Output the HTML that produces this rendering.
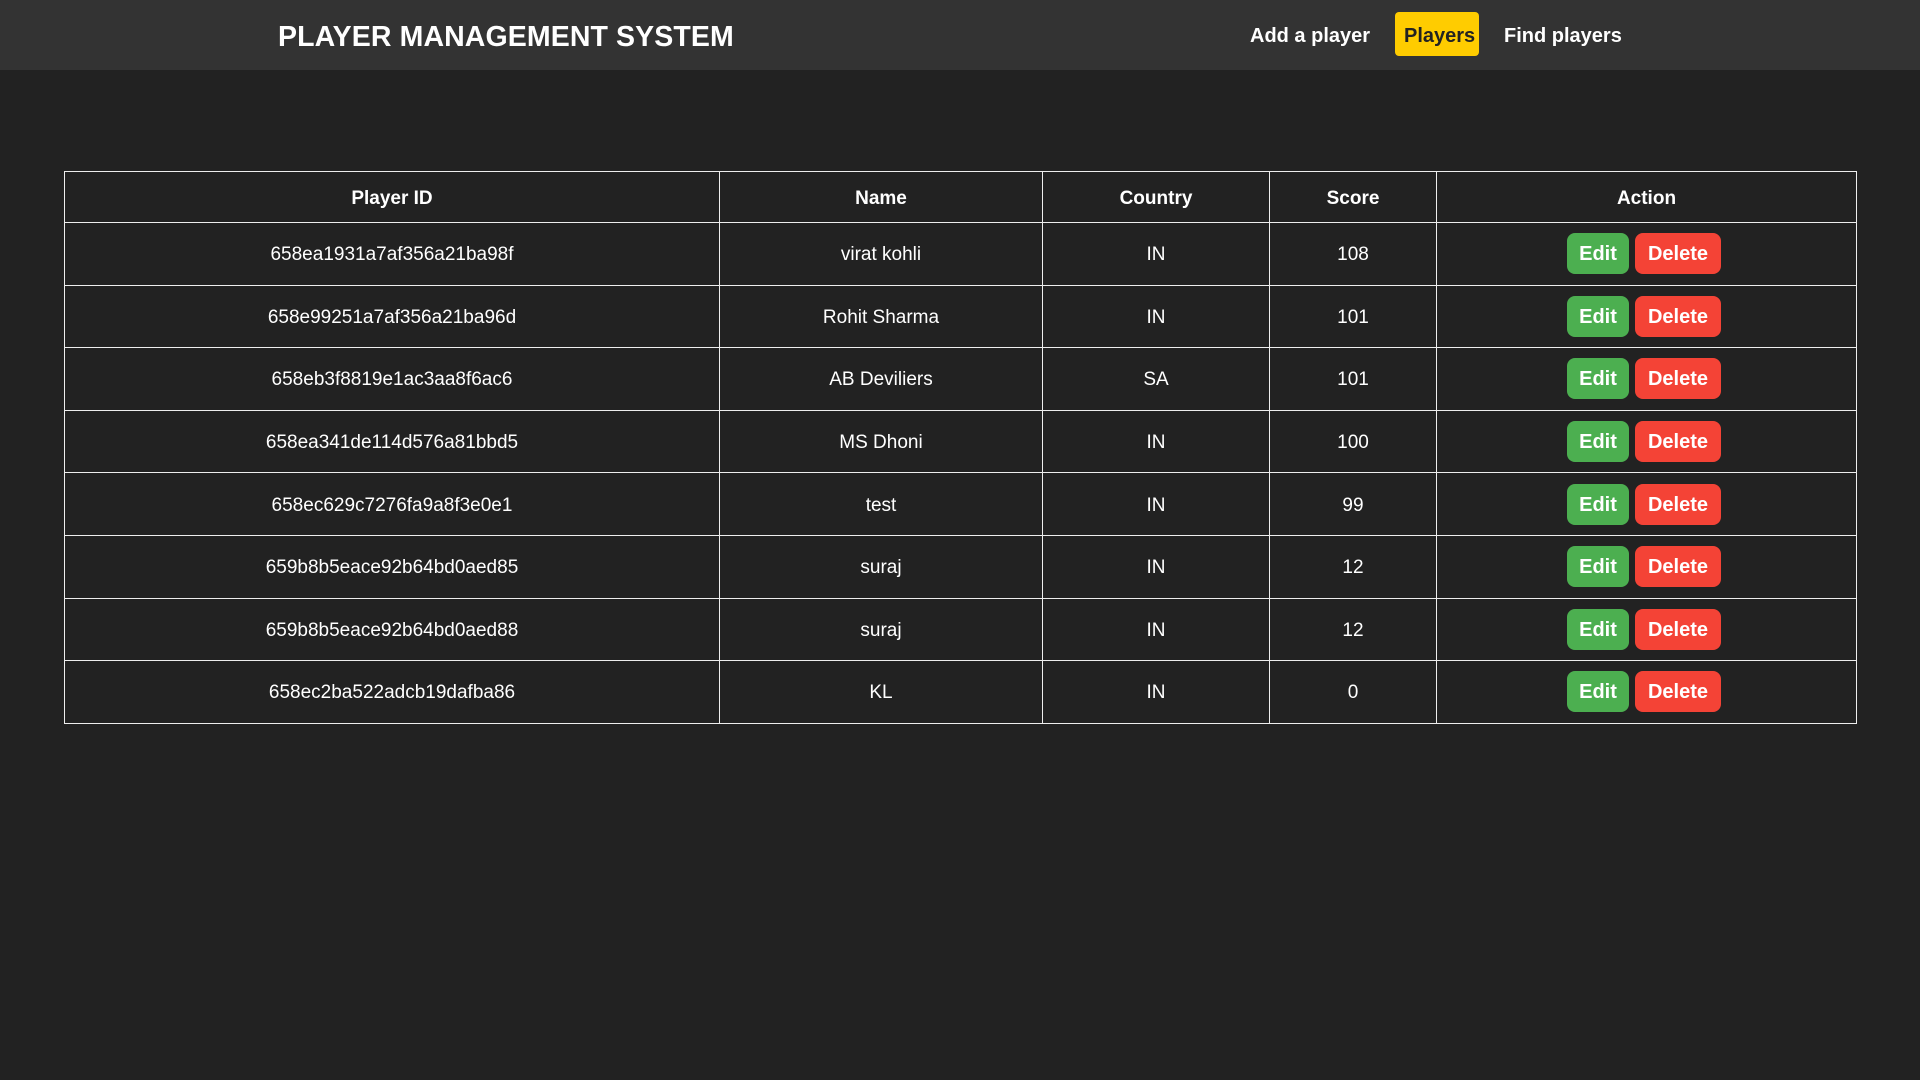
<!DOCTYPE html>
<html><head><meta charset="utf-8"><style>
*{margin:0;padding:0;box-sizing:border-box}
body{width:1920px;height:1080px;background:#222;font-family:"Liberation Sans",sans-serif;color:#fff;overflow:hidden}
.hdr{height:70px;background:#333;position:relative}
.title{position:absolute;left:278px;top:21px;font-size:28.5px;font-weight:bold;letter-spacing:0.1px}
.nav{position:absolute;top:14px;height:44px;line-height:44px;font-size:20px;font-weight:bold}
.pl{top:12px;background:#ffcc00;color:#222;border-radius:4px;padding:0 9px;left:1395px;width:84px;text-align:center}
table{position:absolute;left:64px;top:171px;width:1793px;border-collapse:collapse}
td,th{border:1px solid #eee;text-align:center;font-size:19px}
th{height:51px;font-weight:bold;padding-top:3px}
td{height:62.6px;padding-top:3px}
td:last-child{padding-top:0;padding-right:5px}
.b{display:inline-block;height:41px;line-height:43px;border-radius:8px;font-size:20px;font-weight:bold;color:#fff;vertical-align:middle}
.e{background:#4caf50;width:62px}.d{background:#f44336;width:86px;margin-left:6px}
</style></head><body>
<div class="hdr"><div class="title">PLAYER MANAGEMENT SYSTEM</div>
<div class="nav" style="left:1250px">Add a player</div>
<div class="nav pl" style="line-height:48px">Players</div>
<div class="nav" style="left:1504px">Find players</div></div>
<table>
<colgroup><col style="width:655px"><col style="width:323px"><col style="width:227px"><col style="width:167px"><col></colgroup>
<tr><th>Player ID</th><th>Name</th><th>Country</th><th>Score</th><th>Action</th></tr>
<tr><td>658ea1931a7af356a21ba98f</td><td>virat kohli</td><td>IN</td><td>108</td><td><span class="b e">Edit</span><span class="b d">Delete</span></td></tr>
<tr><td>658e99251a7af356a21ba96d</td><td>Rohit Sharma</td><td>IN</td><td>101</td><td><span class="b e">Edit</span><span class="b d">Delete</span></td></tr>
<tr><td>658eb3f8819e1ac3aa8f6ac6</td><td>AB Deviliers</td><td>SA</td><td>101</td><td><span class="b e">Edit</span><span class="b d">Delete</span></td></tr>
<tr><td>658ea341de114d576a81bbd5</td><td>MS Dhoni</td><td>IN</td><td>100</td><td><span class="b e">Edit</span><span class="b d">Delete</span></td></tr>
<tr><td>658ec629c7276fa9a8f3e0e1</td><td>test</td><td>IN</td><td>99</td><td><span class="b e">Edit</span><span class="b d">Delete</span></td></tr>
<tr><td>659b8b5eace92b64bd0aed85</td><td>suraj</td><td>IN</td><td>12</td><td><span class="b e">Edit</span><span class="b d">Delete</span></td></tr>
<tr><td>659b8b5eace92b64bd0aed88</td><td>suraj</td><td>IN</td><td>12</td><td><span class="b e">Edit</span><span class="b d">Delete</span></td></tr>
<tr><td>658ec2ba522adcb19dafba86</td><td>KL</td><td>IN</td><td>0</td><td><span class="b e">Edit</span><span class="b d">Delete</span></td></tr>
</table>
</body></html>
